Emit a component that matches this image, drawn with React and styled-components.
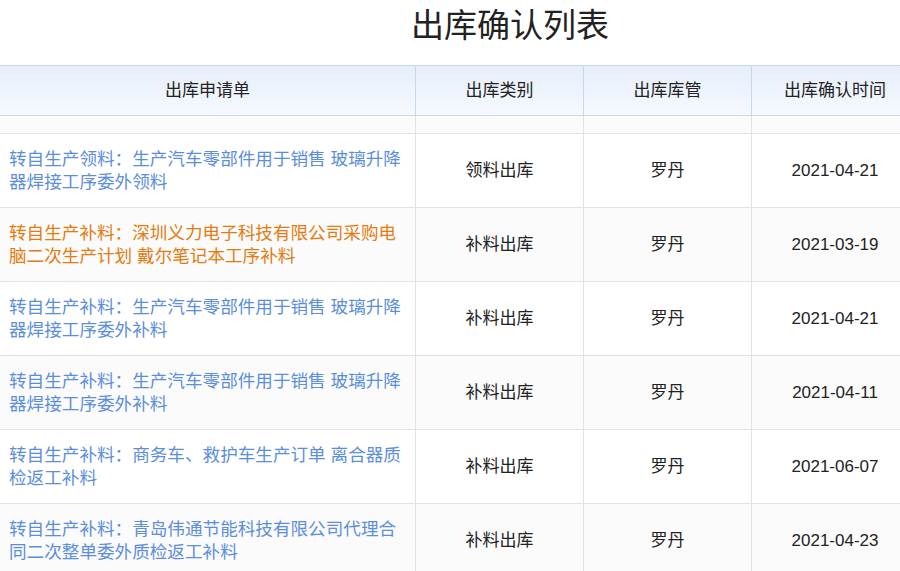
import React from 'react';
import styled, { createGlobalStyle } from 'styled-components';

const GlobalStyle = createGlobalStyle`
  body { margin: 0; background: #fff; overflow: hidden; font-family: "Liberation Sans", "Noto Sans CJK SC", sans-serif; }
`;

const Page = styled.div`
  width: 900px;
  height: 571px;
  overflow: hidden;
`;

const Title = styled.h1`
  margin: 0;
  height: 65px;
  padding-left: 120px;
  line-height: 52px;
  text-align: center;
  font-size: 33px;
  font-weight: normal;
  color: #222;
`;

const Table = styled.div`
  width: 918px;
`;

const Row = styled.div`
  display: grid;
  grid-template-columns: 415px 168px 168px 167px;
  height: ${p => p.h}px;
  background: ${p => p.alt ? '#fbfbfb' : '#fff'};
  border-bottom: 1px solid #e3e3e3;
  box-sizing: border-box;
`;

const HeadRow = styled(Row)`
  background: linear-gradient(#e6eefb, #f6f9fe);
  border-top: 1px solid #c9daee;
  border-bottom: 1px solid #c5d8ec;
`;

const Cell = styled.div`
  display: flex;
  align-items: center;
  justify-content: ${p => p.left ? 'flex-start' : 'center'};
  padding: ${p => p.left ? '0 14px 0 9px' : '0'};
  border-left: ${p => p.first ? 'none' : `1px solid ${p.head ? '#c5d8ec' : '#e3e3e3'}`};
  font-size: ${p => p.left ? 17.6 : 17}px;
  line-height: 23px;
  color: ${p => p.color || '#222'};
`;

const rows = [
  ['转自生产领料：生产汽车零部件用于销售 玻璃升降器焊接工序委外领料', '领料出库', '2021-04-21', '#5b8edc'],
  ['转自生产补料：深圳义力电子科技有限公司采购电脑二次生产计划 戴尔笔记本工序补料', '补料出库', '2021-03-19', '#e57a0e'],
  ['转自生产补料：生产汽车零部件用于销售 玻璃升降器焊接工序委外补料', '补料出库', '2021-04-21', '#5b8edc'],
  ['转自生产补料：生产汽车零部件用于销售 玻璃升降器焊接工序委外补料', '补料出库', '2021-04-11', '#5b8edc'],
  ['转自生产补料：商务车、救护车生产订单 离合器质检返工补料', '补料出库', '2021-06-07', '#5b8edc'],
  ['转自生产补料：青岛伟通节能科技有限公司代理合同二次整单委外质检返工补料', '补料出库', '2021-04-23', '#5b8edc'],
];

export default function App() {
  return (
    <Page>
      <GlobalStyle />
      <Title>出库确认列表</Title>
      <Table>
        <HeadRow h={51}>
          <Cell head first>出库申请单</Cell>
          <Cell head>出库类别</Cell>
          <Cell head>出库库管</Cell>
          <Cell head>出库确认时间</Cell>
        </HeadRow>
        <Row h={18} alt>
          <Cell first /><Cell /><Cell /><Cell />
        </Row>
        {rows.map((r, i) => (
          <Row key={i} h={74} alt={i % 2 === 1}>
            <Cell first left color={r[3]}>{r[0]}</Cell>
            <Cell>{r[1]}</Cell>
            <Cell>罗丹</Cell>
            <Cell>{r[2]}</Cell>
          </Row>
        ))}
      </Table>
    </Page>
  );
}
